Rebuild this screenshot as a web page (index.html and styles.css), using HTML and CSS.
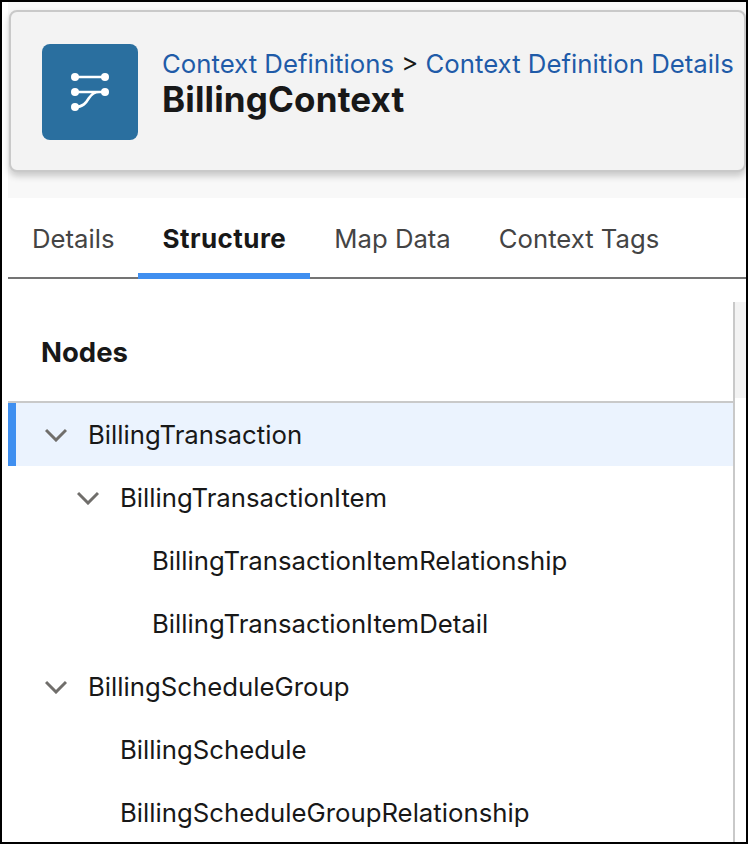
FILE: index.html
```html
<!DOCTYPE html>
<html lang="en">
	<head>
		<meta charset="UTF-8" />
		<meta name="viewport" content="width=device-width, initial-scale=1.0" />
		<title>BillingContext</title>
		<link rel="stylesheet" href="styles.css">
	</head>
	<body>
		<div class="frame">
			<div class="page-top">
				<div class="page-header">
					<div class="header-icon">
						<svg width="48" height="48" viewBox="0 0 48 48" fill="none">
							<path d="M9 9H39M9 24H39M9 39C17 39 20 35 23 30C25 27 28 24 33 24" stroke="#fff" stroke-width="2.6" />
							<circle cx="9" cy="9" r="4" fill="#fff" />
							<circle cx="39" cy="9" r="4" fill="#fff" />
							<circle cx="9" cy="24" r="4" fill="#fff" />
							<circle cx="39" cy="24" r="4" fill="#fff" />
							<circle cx="9" cy="39" r="4" fill="#fff" />
						</svg>
					</div>
					<div class="header-text">
						<div class="breadcrumb"><a>Context Definitions</a> &gt; <a>Context Definition Details</a></div>
						<h1>BillingContext</h1>
					</div>
				</div>
			</div>

			<div class="tabs">
				<div class="tab">Details</div>
				<div class="tab active">Structure</div>
				<div class="tab">Map Data</div>
				<div class="tab">Context Tags</div>
			</div>

			<div class="panel">
				<h2>Nodes</h2>
				<div class="tree">
					<div class="node level-1 selected">
						<svg class="chevron" width="22" height="14" viewBox="0 0 22 14"><path d="M1 2L11 12L21 2" /></svg>
						BillingTransaction
					</div>
					<div class="node level-2">
						<svg class="chevron" width="22" height="14" viewBox="0 0 22 14"><path d="M1 2L11 12L21 2" /></svg>
						BillingTransactionItem
					</div>
					<div class="node level-3">BillingTransactionItemRelationship</div>
					<div class="node level-3">BillingTransactionItemDetail</div>
					<div class="node level-1">
						<svg class="chevron" width="22" height="14" viewBox="0 0 22 14"><path d="M1 2L11 12L21 2" /></svg>
						BillingScheduleGroup
					</div>
					<div class="node level-2">BillingSchedule</div>
					<div class="node level-2">BillingScheduleGroupRelationship</div>
				</div>
				<div class="scroll-track">
					<div class="scroll-thumb"></div>
				</div>
			</div>
		</div>
	</body>
</html>
```

FILE: styles.css
```css
* {
	margin: 0;
	padding: 0;
	box-sizing: border-box;
}

html,
body {
	height: 100%;
	background: #fff;
	overflow: hidden;
}

body {
	font-family: "Inter", "Liberation Sans", sans-serif;
	color: #181818;
}

.frame {
	height: 844px;
	border: 2px solid #000;
	padding: 0 0 0 6px;
	overflow: hidden;
	background: #fff;
}

/* header card */
.page-top {
	height: 196px;
	padding: 8px 0 0 1px;
	background: #f8f8f8;
}

.page-header {
	display: flex;
	align-items: flex-start;
	gap: 24px;
	height: 162px;
	padding: 32px 32px 0 31px;
	background: #f3f3f3;
	border: 2px solid #c9c9c9;
	border-radius: 8px;
	box-shadow: 0 4px 7px rgba(0, 0, 0, 0.2);
	white-space: nowrap;
}

.header-icon {
	width: 96px;
	height: 96px;
	flex: none;
	display: flex;
	align-items: center;
	justify-content: center;
	background: #2a6f9f;
	border-radius: 8px;
}

.header-text {
	padding-top: 4px;
}

.breadcrumb {
	font-size: 25.75px;
	line-height: 32px;
	color: #181818;
}

.breadcrumb a {
	color: #1f5ba8;
}

h1 {
	font-size: 35px;
	line-height: 38px;
	font-weight: 700;
	letter-spacing: 0.15px;
	color: #181818;
}

/* tabs */
.tabs {
	display: flex;
	height: 80px;
	margin-top: 1px;
	border-bottom: 2px solid #747474;
}

.tab {
	height: 80px;
	padding: 0 24px;
	font-size: 25.7px;
	line-height: 79px;
	color: #444;
	white-space: nowrap;
}

.tab.active {
	font-size: 26px;
	font-weight: 700;
	letter-spacing: 0.45px;
	color: #181818;
	border-bottom: 6px solid #3f8ff0;
}

/* nodes */
.panel {
	position: relative;
	height: 600px;
}

.panel h2 {
	height: 124px;
	padding: 55px 0 0 33px;
	font-size: 27.5px;
	line-height: 36px;
	font-weight: 700;
	color: #181818;
	border-bottom: 2px solid #c9c9c9;
	margin-right: 13px;
}

.tree {
	margin-right: 13px;
}

.node {
	display: flex;
	align-items: center;
	height: 63px;
	font-size: 25.75px;
	color: #181818;
	white-space: nowrap;
}

.node.selected {
	background: #ebf3fe;
	border-left: 8px solid #3f8ff0;
}

.chevron {
	flex: none;
	margin-right: 21px;
}

.chevron path {
	fill: none;
	stroke: #706e6b;
	stroke-width: 3;
}

.level-1 {
	padding-left: 37px;
}

.level-1.selected {
	padding-left: 29px;
}

.level-2 {
	padding-left: 69px;
}

.level-2:not(:has(.chevron)) {
	padding-left: 112px;
}

.level-3 {
	padding-left: 144px;
}

.scroll-track {
	position: absolute;
	top: 23px;
	right: 0;
	bottom: 0;
	width: 13px;
	border-left: 2px solid #c9c9c9;
}

.scroll-thumb {
	height: 96px;
	background: #f3f3f3;
}
```
